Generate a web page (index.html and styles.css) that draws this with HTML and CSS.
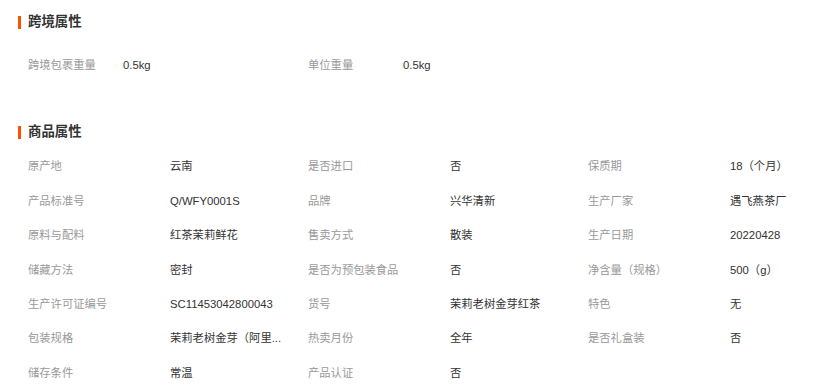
FILE: index.html
```html
<!DOCTYPE html>
<html lang="zh-CN">
<head>
<meta charset="utf-8">
<title>商品属性</title>
<link rel="stylesheet" href="styles.css">
</head>
<body>
<div class="page">
  <section class="section">
    <h2 class="section-title">跨境属性</h2>
    <div class="cross-grid">
      <div class="label">跨境包裹重量</div><div class="value">0.5kg</div>
      <div class="label">单位重量</div><div class="value">0.5kg</div>
    </div>
  </section>
  <section class="section section-product">
    <h2 class="section-title">商品属性</h2>
    <div class="attr-grid">
      <div class="label">原产地</div><div class="value">云南</div>
      <div class="label">是否进口</div><div class="value">否</div>
      <div class="label">保质期</div><div class="value">18（个月）</div>

      <div class="label">产品标准号</div><div class="value">Q/WFY0001S</div>
      <div class="label">品牌</div><div class="value">兴华清新</div>
      <div class="label">生产厂家</div><div class="value">遇飞燕茶厂</div>

      <div class="label">原料与配料</div><div class="value">红茶茉莉鲜花</div>
      <div class="label">售卖方式</div><div class="value">散装</div>
      <div class="label">生产日期</div><div class="value">20220428</div>

      <div class="label">储藏方法</div><div class="value">密封</div>
      <div class="label">是否为预包装食品</div><div class="value">否</div>
      <div class="label">净含量（规格）</div><div class="value">500（g）</div>

      <div class="label">生产许可证编号</div><div class="value">SC11453042800043</div>
      <div class="label">货号</div><div class="value">茉莉老树金芽红茶</div>
      <div class="label">特色</div><div class="value">无</div>

      <div class="label">包装规格</div><div class="value">茉莉老树金芽（阿里...</div>
      <div class="label">热卖月份</div><div class="value">全年</div>
      <div class="label">是否礼盒装</div><div class="value">否</div>

      <div class="label">储存条件</div><div class="value">常温</div>
      <div class="label">产品认证</div><div class="value">否</div>
      <div class="label"></div><div class="value"></div>
    </div>
  </section>
</div>
</body>
</html>
```

FILE: styles.css
```css
html, body {
  margin: 0;
  padding: 0;
  background: #ffffff;
  overflow: hidden;
}

.page {
  padding: 12px 0 0 18px;
  font-family: "Liberation Sans", "Noto Sans CJK SC", sans-serif;
  font-size: 11.3px;
  color: #333333;
}

.section-title {
  display: flex;
  align-items: center;
  height: 20px;
  margin: 0;
  font-size: 13.4px;
  font-weight: bold;
  color: #333333;
  line-height: 20px;
}

.section-title::before {
  content: "";
  display: block;
  width: 3px;
  height: 13px;
  margin-right: 7px;
  background: #ff5000;
}

.cross-grid {
  display: grid;
  grid-template-columns: 95px 185px 95px 1fr;
  grid-auto-rows: 34.4px;
  margin-top: 16px;
  padding-left: 10px;
}

.section-product {
  margin-top: 40px;
}

.attr-grid {
  display: grid;
  grid-template-columns: 142px 138px 142px 138px 142px 1fr;
  grid-auto-rows: 34.4px;
  margin-top: 7px;
  padding-left: 10px;
}

.label,
.value {
  line-height: 34.4px;
  white-space: nowrap;
}

.label {
  color: #999999;
}

.value {
  color: #333333;
}
```
